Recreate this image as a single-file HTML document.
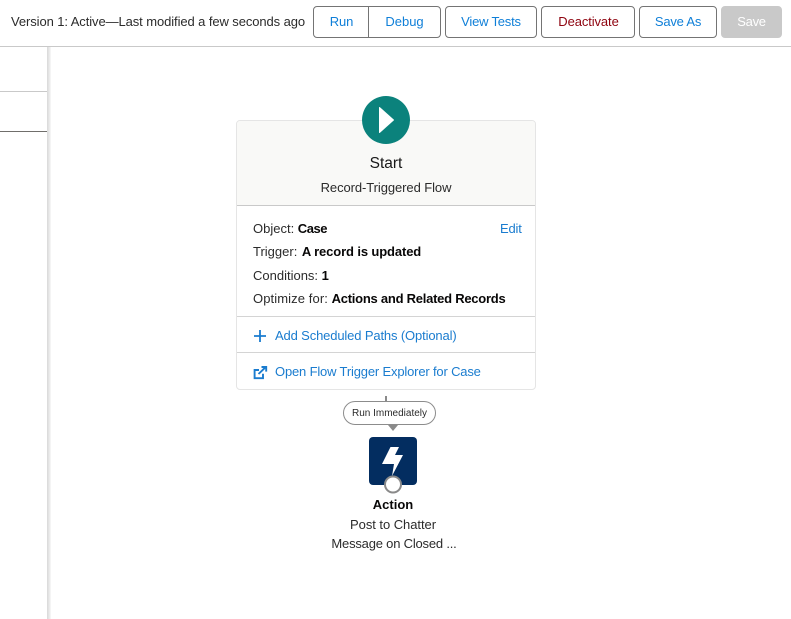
<!DOCTYPE html>
<html>
<head>
<meta charset="utf-8">
<style>
html,body{margin:0;padding:0;background:#fff}
body{width:791px;height:619px;position:relative;overflow:hidden;font-family:"Liberation Sans",Arial,sans-serif;font-size:13px;color:#2b2b2b}
.a{position:absolute;white-space:nowrap}
.t{position:absolute;white-space:nowrap;line-height:16px}
.btn{position:absolute;top:6px;height:32px;box-sizing:border-box;border:1px solid #747474;border-radius:4px;background:#fff;color:#0f7fd8;line-height:30px;text-align:center;font-size:13px;white-space:nowrap}
b{font-weight:700;color:#080707;letter-spacing:-.2px}
.link{color:#1a7ccf}
</style>
</head>
<body>
<div class="t" style="left:11px;top:14px;letter-spacing:-.09px">Version 1: Active—Last modified a few seconds ago</div>
<div class="btn" style="left:313px;width:56px;border-radius:4px 0 0 4px;letter-spacing:-.1px;padding-left:1px">Run</div>
<div class="btn" style="left:368px;width:73px;border-radius:0 4px 4px 0">Debug</div>
<div class="btn" style="left:445px;width:92px;letter-spacing:-.2px">View Tests</div>
<div class="btn" style="left:541px;width:94px;color:#8e030f;letter-spacing:-.1px;padding-left:1px">Deactivate</div>
<div class="btn" style="left:639px;width:78px;letter-spacing:-.2px">Save As</div>
<div class="btn" style="left:721px;width:61px;background:#c9c9c9;border-color:#c9c9c9;color:#fff;letter-spacing:-.3px">Save</div>
<div class="a" style="left:0;top:46px;width:791px;height:1px;background:#c9c9c9"></div>

<div class="a" style="left:47px;top:47px;width:4px;height:572px;background:linear-gradient(90deg,#d8d8d8,#e8e8e8 55%,#f8f8f8)"></div>
<div class="a" style="left:0;top:91px;width:47px;height:1px;background:#c9c9c9"></div>
<div class="a" style="left:0;top:131px;width:47px;height:1px;background:#706e6b"></div>

<div class="a" style="left:236px;top:120px;width:300px;height:270px;box-sizing:border-box;border:1px solid #e5e5e5;border-radius:4px;background:#fff"></div>
<div class="a" style="left:237px;top:121px;width:298px;height:84px;background:#f9f9f7;border-radius:3px 3px 0 0"></div>
<div class="a" style="left:237px;top:205px;width:298px;height:1px;background:#c9c9c9"></div>
<div class="a" style="left:237px;top:316px;width:298px;height:1px;background:#d4d4d4"></div>
<div class="a" style="left:237px;top:352px;width:298px;height:1px;background:#d4d4d4"></div>

<svg class="a" style="left:360px;top:94px" width="52" height="52" viewBox="0 0 52 52"><circle cx="26" cy="26" r="24" fill="#0b827c"/><path d="M19.5 13.5 L33.5 26 L19.5 38.5 Z" fill="#fff" stroke="#fff" stroke-width="1" stroke-linejoin="round"/></svg>

<div class="t" style="left:236px;width:300px;text-align:center;top:155px;font-size:15.5px;line-height:18px;color:#181818">Start</div>
<div class="t" style="left:236px;width:300px;text-align:center;top:180px;font-size:13px;letter-spacing:-.08px">Record-Triggered Flow</div>

<div class="t" style="left:253px;top:221px">Object: <b style="letter-spacing:-.45px">Case</b></div>
<div class="t link" style="left:500px;top:221px;letter-spacing:-.2px">Edit</div>
<div class="t" style="left:253px;top:244px">Trigger:<b style="margin-left:4.5px;letter-spacing:-.12px">A record is updated</b></div>
<div class="t" style="left:253px;top:268px">Conditions: <b>1</b></div>
<div class="t" style="left:253px;top:291px"><span style="letter-spacing:.1px">Optimize for:</span> <b style="letter-spacing:-.25px">Actions and Related Records</b></div>

<svg class="a" style="left:253px;top:329px" width="14" height="14" viewBox="0 0 14 14"><path d="M7 1V13M1 7H13" stroke="#1a7ccf" stroke-width="1.8" fill="none"/></svg>
<div class="t link" style="left:275px;top:328px;letter-spacing:-.14px">Add Scheduled Paths (Optional)</div>

<svg class="a" style="left:253px;top:364px" width="15" height="16" viewBox="0 0 15 16" fill="none" stroke="#1a7ccf" stroke-width="1.9"><path d="M6 6H1.6V14.2H10V9.8"/><path d="M5.5 10L13 2.8"/><path d="M8.5 3H13.2V7.6"/></svg>
<div class="t link" style="left:275px;top:364px;letter-spacing:-.17px">Open Flow Trigger Explorer for Case</div>

<div class="a" style="left:385px;top:396px;width:2px;height:6px;background:#8a8a8a"></div>
<div class="a" style="left:343px;top:401px;width:93px;height:24px;box-sizing:border-box;border:1px solid #8c8c8c;border-radius:12px;background:#fff;text-align:center;font-size:10px;line-height:23px;color:#2b2b2b">Run Immediately</div>
<svg class="a" style="left:388px;top:425px" width="10" height="6" viewBox="0 0 10 6"><path d="M0 0H10L5 6Z" fill="#8a8a8a"/></svg>

<svg class="a" style="left:367px;top:435px" width="52" height="60" viewBox="367 435 52 60">
<rect x="369" y="437" width="48" height="48" rx="4" fill="#032d60"/>
<path d="M390.5 447H399L395 455H403L392 476L394 464H382Z" fill="#fff"/>
<circle cx="393" cy="484.5" r="8" fill="#fff" stroke="#8a8a8a" stroke-width="2"/>
</svg>

<div class="t" style="left:293px;width:200px;text-align:center;top:497px"><b style="letter-spacing:0">Action</b></div>
<div class="t" style="left:293px;width:200px;text-align:center;top:517px;letter-spacing:-.05px">Post to Chatter</div>
<div class="t" style="left:293px;width:200px;text-align:center;top:536px;letter-spacing:-.2px;padding-left:1px">Message on Closed ...</div>
</body>
</html>
